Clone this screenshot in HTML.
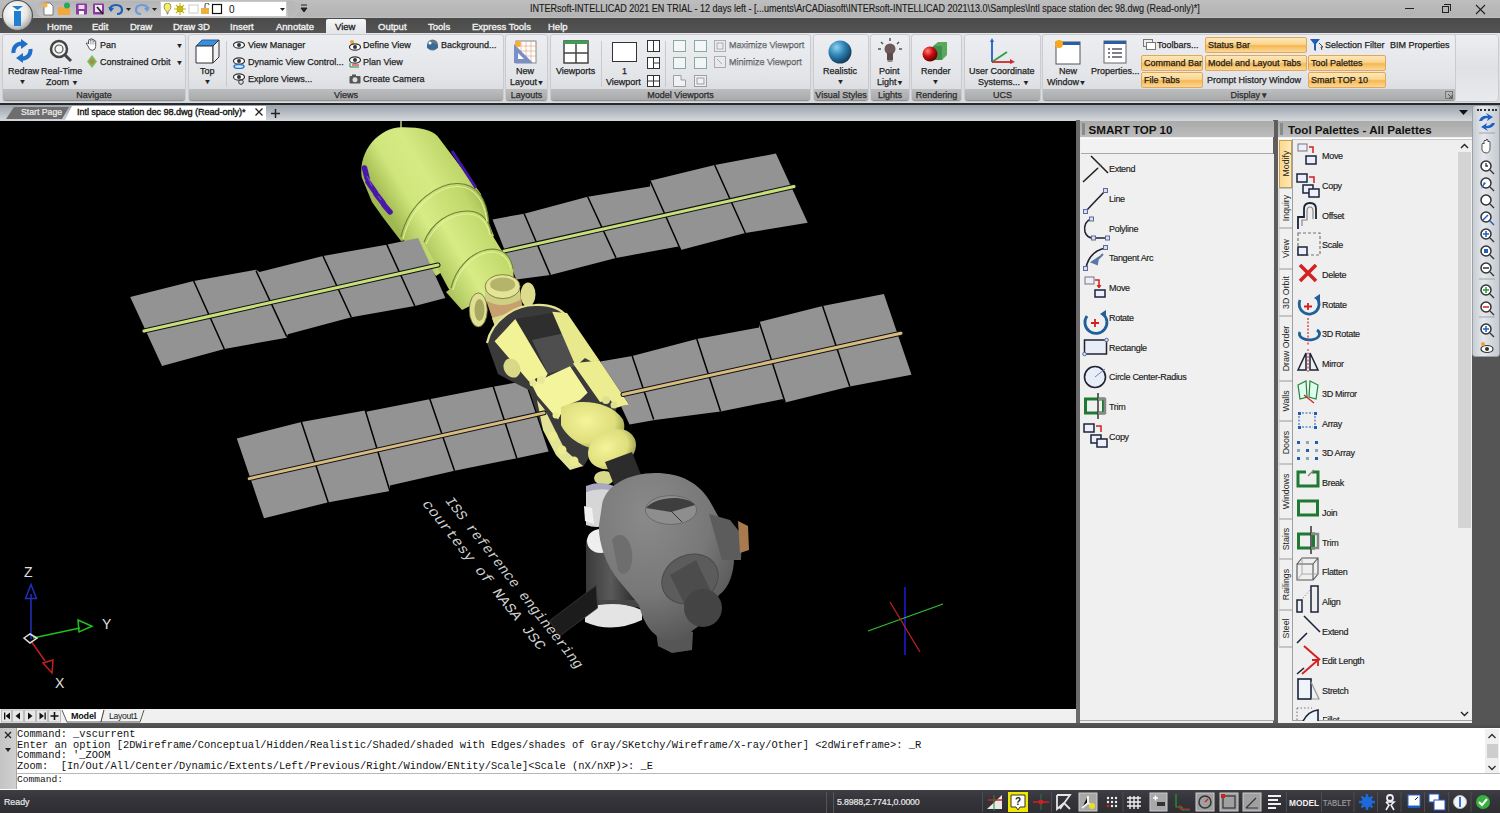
<!DOCTYPE html>
<html><head><meta charset="utf-8">
<style>
*{box-sizing:border-box;margin:0;padding:0}
html,body{width:1500px;height:813px;overflow:hidden;background:#4b4b4b;font-family:"Liberation Sans",sans-serif;font-size:9px;color:#1e1e1e}
#ribbon .t,#ribbon .ob,.lb{-webkit-text-stroke:.25px #222}
.a{position:absolute}
.t{position:absolute;white-space:nowrap;line-height:1}
#title{left:0;top:0;width:1500px;height:18px;background:linear-gradient(#bebebe,#b3b3b3 90%,#c2c2c2)}
#menubar{left:0;top:18px;width:1500px;height:15px;background:linear-gradient(#4a4a4a,#545454)}
#ribbon{left:0;top:33px;width:1500px;height:70px;background:linear-gradient(#e4e5e8,#d9dbdf)}
.pnl{position:absolute;top:2px;height:66px;border-radius:3px;background:linear-gradient(#eceef1 0%,#e3e5e9 60%,#d6d8dc 100%);box-shadow:0 0 0 1px #c9cbcf}
.pnl .lb{position:absolute;left:0;right:0;bottom:0;height:12px;background:linear-gradient(#bcbdbf,#a9aaab);border-bottom:1px solid #929292;border-radius:0 0 3px 3px;text-align:center;font-size:9px;line-height:12px;color:#333}
#filetabs{left:0;top:103px;width:1500px;height:18px;background:linear-gradient(#262a2e 0,#262a2e 1.5px,#9ca3ab 2px,#b4bac1 9px,#d2d6da 17px)}
#viewport{left:0;top:121px;width:1076px;height:588px;background:#000;overflow:hidden}
#modeltabs{left:0;top:709px;width:1076px;height:14px;background:#f0f0f0}
#cmd{left:0;top:728px;width:1500px;height:62px;background:#fff}
#status{left:0;top:790px;width:1500px;height:23px;background:linear-gradient(#3e3e44,#34343a 40%,#2e2e32)}
#smart{left:1080px;top:121px;width:193px;height:602px;background:#f0f0f0}
#tp{left:1278px;top:121px;width:194px;height:602px;background:#f0f0f0}
#rtool{left:1472px;top:105px;width:28px;height:252px;background:linear-gradient(90deg,#c8cdd3,#e4e8ec 40%,#c4cad0);border:1px solid #9aa0a6;border-radius:3px}
.ob{position:absolute;height:16px;border:1px solid #e0a858;border-radius:2px;background:linear-gradient(#fde7b8 0%,#fbd590 45%,#f6b850 55%,#fbd79a 100%);padding-left:2px;line-height:14px;white-space:nowrap;color:#1a1a1a}
.pt{position:absolute;white-space:nowrap;line-height:1;font-size:9px;margin-top:1.5px;margin-left:-1px;letter-spacing:-.3px;color:#1a1a1a;-webkit-text-stroke:.15px #1a1a1a}
.mono{font-family:"Liberation Mono",monospace;font-size:10.4px;line-height:10.7px;white-space:nowrap;color:#111}
.mt{position:absolute;top:4px;font-size:9.5px;color:#f0f0f0;line-height:1;-webkit-text-stroke:.35px #f0f0f0}
</style></head><body>
<!-- TITLE -->
<div id="title" class="a">

  <div class="a" style="left:36px;top:1px;width:262px;height:16px;border-radius:8px;background:linear-gradient(#b4b4b4,#c6c6c6)"></div>
  <svg class="a" style="left:42px;top:2px" width="120" height="14" viewBox="0 0 120 14">
    <path d="M2 1 H8 L11 4 V13 H2 Z" fill="#fff" stroke="#666" stroke-width=".8"/><circle cx="3" cy="3" r="2.5" fill="#f7b040"/>
    <path d="M16 5 H21 L22 6 H28 V13 H16 Z" fill="#f2a83a"/><circle cx="25" cy="3.5" r="3" fill="#2aa860"/>
    <rect x="34" y="1.5" width="11" height="11" fill="#8a3aa0" rx="1"/><rect x="36.5" y="3" width="6" height="4" fill="#e8d8f0"/><rect x="37" y="9" width="5" height="3.5" fill="#fff"/>
    <rect x="51" y="1.5" width="11" height="11" fill="#8a3aa0" rx="1"/><rect x="53" y="3" width="7" height="7" fill="#f0e8f4"/><path d="M55 5 L61 12" stroke="#222" stroke-width="1.8"/>
    <path d="M68 8 Q68 3 74 3 Q80 3 80 8 Q80 12 75 12" stroke="#1f5fb8" stroke-width="2.2" fill="none"/><path d="M66 5 L69 10 L72 6 Z" fill="#1f5fb8"/>
    <path d="M84 6 L89 6 L86.5 9 Z" fill="#222"/>
    <path d="M106 8 Q106 3 100 3 Q94 3 94 8 Q94 12 99 12" stroke="#6a9ad8" stroke-width="2.2" fill="none"/><path d="M108 5 L105 10 L102 6 Z" fill="#6a9ad8"/>
    <path d="M110 6 L115 6 L112.5 9 Z" fill="#222"/>
  </svg>
  <div class="a" style="left:160px;top:1px;width:127px;height:16px;background:#fff;border:1px solid #c8c8c8"></div>
  <svg class="a" style="left:163px;top:3px" width="125" height="12" viewBox="0 0 125 12">
    <path d="M4 11 V9 Q1 6 1 4 Q1 0 4.5 0 Q8 0 8 4 Q8 6 5 9 V11 Z" fill="#f4ee60" stroke="#555" stroke-width=".6"/>
    <circle cx="17" cy="6" r="3" fill="#f0e020" stroke="#444" stroke-width=".5"/><path d="M17 0 V12 M11 6 H23 M13 2 L21 10 M21 2 L13 10" stroke="#c8b800" stroke-width="1.1"/>
    <rect x="26" y="2" width="9" height="8" fill="none" stroke="#ccc"/>
    <rect x="38" y="5" width="8" height="6" fill="#f0b040"/><path d="M42 5 V2 Q42 0 44 0 Q46 0 46 2" stroke="#444" fill="none"/>
    <rect x="49.5" y="1.5" width="9" height="9" fill="#fff" stroke="#111" stroke-width="1.2"/>
    <text x="66" y="10" font-family="Liberation Sans" font-size="10" fill="#111">0</text>
    <path d="M117 5 L122 5 L119.5 8 Z" fill="#222"/>
  </svg>
  <div class="a" style="left:288px;top:1px;width:9px;height:16px;border-radius:0 8px 8px 0;background:#b8b8b8"></div>
  <svg class="a" style="left:300px;top:4px" width="8" height="9" viewBox="0 0 8 9"><path d="M1 1 H7 M1 4 L7 4 L4 8 Z" stroke="#222" fill="#222"/></svg>
  <div class="a" style="left:1405px;top:8px;width:9px;height:1.2px;background:#222"></div>
  <div class="a" style="left:1442px;top:6px;width:7px;height:7px;border:1px solid #222"></div>
  <div class="a" style="left:1444px;top:4px;width:7px;height:7px;border-top:1px solid #222;border-right:1px solid #222"></div>
  <svg class="a" style="left:1475px;top:4px" width="11" height="11" viewBox="0 0 11 11"><path d="M1 1 L10 10 M10 1 L1 10" stroke="#222" stroke-width="1.1"/></svg>
  <div class="t" style="left:530px;top:3.5px;font-size:10.4px;color:#1a1a1a;transform:scaleX(.868);transform-origin:0 0;-webkit-text-stroke:.15px #1a1a1a">INTERsoft-INTELLICAD 2021 EN TRIAL - 12 days left - [...uments\ArCADiasoft\INTERsoft-INTELLICAD 2021\13.0\Samples\Intl space station dec 98.dwg (Read-only)*]</div>
</div>
<!-- MENUBAR -->
<div id="menubar" class="a">
  <div class="mt" style="left:47px">Home</div>
  <div class="mt" style="left:92px">Edit</div>
  <div class="mt" style="left:130px">Draw</div>
  <div class="mt" style="left:173px">Draw 3D</div>
  <div class="mt" style="left:230px">Insert</div>
  <div class="mt" style="left:276px">Annotate</div>
  <div class="a" style="left:326px;top:1px;width:40px;height:14px;background:linear-gradient(#f4f5f7,#e4e6e9);border-radius:2px 2px 0 0"></div>
  <div class="mt" style="left:335px;color:#222;-webkit-text-stroke:.3px #222">View</div>
  <div class="mt" style="left:378px">Output</div>
  <div class="mt" style="left:428px">Tools</div>
  <div class="mt" style="left:472px">Express Tools</div>
  <div class="mt" style="left:548px">Help</div>
</div>

<svg class="a" style="left:1px;top:0px" width="33" height="33" viewBox="0 0 33 33"><defs><radialGradient id="lg" cx=".4" cy=".35" r=".7"><stop offset="0" stop-color="#ffffff"/><stop offset=".6" stop-color="#e6e6e6"/><stop offset="1" stop-color="#9a9a9a"/></radialGradient></defs><circle cx="16.5" cy="15.5" r="15" fill="url(#lg)" stroke="#555" stroke-width="1.2"/><path d="M11 6 H22 L16.5 10 Z" fill="#1f7fd0"/><rect x="13" y="11" width="7" height="15" fill="#1f7fd0"/></svg>
<!-- RIBBON -->
<div id="ribbon" class="a">
  <div class="pnl" style="left:3px;width:182px"><div class="lb">Navigate</div></div>
  <div class="pnl" style="left:189px;width:314px"><div class="lb">Views</div></div>
  <div class="pnl" style="left:506px;width:41px"><div class="lb">Layouts</div></div>
  <div class="pnl" style="left:551px;width:259px"><div class="lb">Model Viewports</div></div>
  <div class="pnl" style="left:814px;width:54px"><div class="lb">Visual Styles</div></div>
  <div class="pnl" style="left:871px;width:38px"><div class="lb">Lights</div></div>
  <div class="pnl" style="left:912px;width:49px"><div class="lb">Rendering</div></div>
  <div class="pnl" style="left:965px;width:75px"><div class="lb">UCS</div></div>
  <div class="a" style="left:1455px;top:2px;width:43px;height:66px;border-radius:0 4px 4px 0;background:linear-gradient(#eceef1,#dfe1e5 50%,#e8eaed);box-shadow:0 0 0 1px #c9cbcf"></div>
<div class="pnl" style="left:1043px;width:412px"><div class="lb">Display &#9662;</div></div>

  <!-- Navigate -->
  <svg class="a" style="left:9px;top:6px" width="26" height="24" viewBox="0 0 26 24"><path d="M4.5 14 C4 8 8 4.5 13 4.5" stroke="#1f6fc8" stroke-width="4" fill="none"/><path d="M12 0 L19 5 L12 10 Z" fill="#1f6fc8"/><path d="M21.5 10 C22 16 18 19.5 13 19.5" stroke="#1f6fc8" stroke-width="4" fill="none"/><path d="M14 14 L7 19 L14 24 Z" fill="#1f6fc8"/></svg>
  <div class="t" style="left:8px;top:34px">Redraw</div><div class="t" style="left:19px;top:45px;font-size:7px">&#9660;</div>
  <svg class="a" style="left:48px;top:5px" width="26" height="26" viewBox="0 0 26 26"><circle cx="11" cy="11" r="8" fill="#f4f4f4" stroke="#444" stroke-width="2.5"/><circle cx="11" cy="11" r="4" fill="none" stroke="#555" stroke-width="1.2"/><path d="M17 17 L23 23" stroke="#444" stroke-width="3"/></svg>
  <div class="t" style="left:41px;top:34px">Real-Time</div><div class="t" style="left:46px;top:45px">Zoom <span style="font-size:7px">&#9660;</span></div>
  <svg class="a" style="left:85px;top:5px" width="13" height="13" viewBox="0 0 13 13"><path d="M3 8 L1.5 6 Q1 4.8 2.3 4.8 L3.5 6 V2.5 Q3.5 1.5 4.4 1.5 Q5.3 1.5 5.3 2.5 V1.6 Q5.3 .6 6.2 .6 Q7.1 .6 7.1 1.6 V2.2 Q7.1 1.2 8 1.2 Q8.9 1.2 8.9 2.2 V3.4 Q8.9 2.6 9.8 2.6 Q10.7 2.6 10.7 3.6 V8.5 Q10.7 12.3 7 12.3 Q4.3 12.3 3 8 Z" fill="#fff" stroke="#444" stroke-width=".9"/><path d="M5.3 2.5 V6.5 M7.1 2 V6.5 M8.9 3 V6.5" stroke="#666" stroke-width=".6"/></svg>
  <div class="t" style="left:100px;top:8px">Pan</div><div class="t" style="left:176px;top:9px;font-size:7px">&#9660;</div>
  <svg class="a" style="left:86px;top:22px" width="12" height="13" viewBox="0 0 12 13"><path d="M6 0 L11 6.5 L6 13 L1 6.5 Z" fill="#7cbf5a"/><path d="M6 3 L9 6.5 L6 10 L3 6.5 Z" fill="#c46a4a" opacity=".6"/></svg>
  <div class="t" style="left:100px;top:25px">Constrained Orbit</div><div class="t" style="left:176px;top:26px;font-size:7px">&#9660;</div>
  <!-- Views -->
  <svg class="a" style="left:195px;top:6px" width="26" height="26" viewBox="0 0 26 26"><path d="M1 7 L7 1 L24 1 L18 7 Z" fill="#3a8ee0" stroke="#2a5f95"/><path d="M1 7 L18 7 L18 24 L1 24 Z" fill="#fff" stroke="#333"/><path d="M18 7 L24 1 L24 18 L18 24 Z" fill="#f0f0f0" stroke="#333"/></svg>
  <div class="t" style="left:200px;top:34px">Top</div><div class="t" style="left:204px;top:45px;font-size:7px">&#9660;</div>
  <div class="a" style="left:226px;top:8px;width:1px;height:46px;background:#c8c9cc"></div>
  <svg class="a" style="left:233px;top:8px" width="12" height="8" viewBox="0 0 12 8"><ellipse cx="6" cy="4" rx="5.5" ry="3.2" fill="#fff" stroke="#333" stroke-width="1.2"/><circle cx="6" cy="4" r="2" fill="#333"/></svg>
  <div class="t" style="left:248px;top:8px">View Manager</div>
  <svg class="a" style="left:233px;top:24px" width="12" height="12" viewBox="0 0 12 12"><ellipse cx="6" cy="4" rx="5.5" ry="3.2" fill="#fff" stroke="#333" stroke-width="1.2"/><circle cx="6" cy="4" r="2" fill="#333"/><ellipse cx="6" cy="9.5" rx="5" ry="2" fill="none" stroke="#1f78c8" stroke-width="1.5"/></svg>
  <div class="t" style="left:248px;top:25px">Dynamic View Control...</div>
  <svg class="a" style="left:233px;top:40px" width="12" height="12" viewBox="0 0 12 12"><ellipse cx="6" cy="4" rx="5.5" ry="3.2" fill="#fff" stroke="#333" stroke-width="1.2"/><circle cx="6" cy="4" r="2" fill="#333"/><circle cx="8" cy="9" r="2.3" fill="none" stroke="#333"/></svg>
  <div class="t" style="left:248px;top:42px">Explore Views...</div>
  <svg class="a" style="left:349px;top:7px" width="12" height="11" viewBox="0 0 12 11"><circle cx="3" cy="2" r="2" fill="#f0a030"/><ellipse cx="6" cy="7" rx="5.5" ry="3.2" fill="#fff" stroke="#333" stroke-width="1.2"/><circle cx="6" cy="7" r="2" fill="#333"/></svg>
  <div class="t" style="left:363px;top:8px">Define View</div>
  <svg class="a" style="left:349px;top:23px" width="12" height="12" viewBox="0 0 12 12"><ellipse cx="6" cy="4" rx="5.5" ry="3.2" fill="#fff" stroke="#333" stroke-width="1.2"/><circle cx="6" cy="4" r="2" fill="#333"/><path d="M1 7 L1 11 L10 11" stroke="#2a8a3a" fill="none"/><path d="M3 9 L10 9" stroke="#d02020"/></svg>
  <div class="t" style="left:363px;top:25px">Plan View</div>
  <svg class="a" style="left:349px;top:41px" width="12" height="10" viewBox="0 0 12 10"><rect x="0.5" y="2" width="11" height="7.5" rx="1" fill="#555"/><circle cx="6" cy="5.7" r="2.5" fill="#ddd"/><rect x="3" y="0.5" width="4" height="2" fill="#555"/></svg>
  <div class="t" style="left:363px;top:42px">Create Camera</div>
  <svg class="a" style="left:426px;top:6px" width="13" height="12" viewBox="0 0 13 12"><circle cx="6.5" cy="6" r="5.5" fill="#6a7a80"/><path d="M1 6 Q6 2 12 6 L12 9 Q6 12 1 9 Z" fill="#3a6a9a"/><circle cx="4" cy="4" r="1.5" fill="#fff"/></svg>
  <div class="t" style="left:441px;top:8px">Background...</div>
  <!-- Layouts -->
  <svg class="a" style="left:513px;top:7px" width="24" height="24" viewBox="0 0 24 24"><rect x="3" y="1" width="20" height="22" fill="#fff" stroke="#888"/><path d="M3 6 H23 M3 11 H23 M3 16 H23 M8 1 V23 M13 1 V23 M18 1 V23" stroke="#e0a070" stroke-width=".6"/><path d="M1 23 L1 4 L20 23 Z" fill="#7a8fc8"/><path d="M5 19 L5 13 L11 19 Z" fill="#fff"/><circle cx="5" cy="4" r="3" fill="#f7b030"/></svg>
  <div class="t" style="left:516px;top:34px">New</div><div class="t" style="left:510px;top:45px">Layout<span style="font-size:7px">&#9660;</span></div>
  <!-- Model Viewports -->
  <svg class="a" style="left:563px;top:7px" width="26" height="24" viewBox="0 0 26 24"><rect x="1" y="1" width="24" height="22" fill="#fff" stroke="#444" stroke-width="1.5"/><rect x="1" y="1" width="24" height="3" fill="#3aa050"/><path d="M13 4 V23 M1 13 H25" stroke="#444" stroke-width="1.5"/></svg>
  <div class="t" style="left:556px;top:34px">Viewports</div>
  <div class="a" style="left:601px;top:8px;width:1px;height:46px;background:#c8c9cc"></div>
  <div class="a" style="left:612px;top:9px;width:25px;height:20px;background:#fff;border:1px solid #333"></div>
  <div class="t" style="left:622px;top:34px">1</div><div class="t" style="left:606px;top:45px">Viewport</div>
  <svg class="a" style="left:647px;top:7px" width="13" height="48" viewBox="0 0 13 48"><rect x=".5" y=".5" width="12" height="11" fill="#fff" stroke="#333"/><path d="M6.5 .5 V11.5" stroke="#333"/><rect x=".5" y="17.5" width="12" height="11" fill="#fff" stroke="#333"/><path d="M6.5 17.5 V28.5 M6.5 23 H12.5" stroke="#333"/><rect x=".5" y="35.5" width="12" height="11" fill="#fff" stroke="#333"/><path d="M6.5 35.5 V46.5 M.5 41 H12.5" stroke="#333"/></svg>
  <div class="a" style="left:665px;top:8px;width:1px;height:46px;background:#c8c9cc"></div>
  <svg class="a" style="left:673px;top:7px" width="34" height="48" viewBox="0 0 34 48" opacity=".55"><rect x=".5" y=".5" width="12" height="11" fill="#fff" stroke="#3a7a5a"/><rect x="21.5" y=".5" width="12" height="11" fill="#fff" stroke="#3a7a5a"/><rect x=".5" y="17.5" width="12" height="11" fill="#fff" stroke="#3a7a5a"/><rect x="21.5" y="17.5" width="12" height="11" fill="#fff" stroke="#3a7a5a"/><path d="M.5 35.5 H8 V40 H12.5 V46.5 H.5 Z" fill="#fff" stroke="#666"/><rect x="21.5" y="35.5" width="12" height="11" fill="#fff" stroke="#666"/><rect x="24" y="38" width="7" height="6" fill="none" stroke="#666"/></svg>
  <svg class="a" style="left:714px;top:7px" width="12" height="28" viewBox="0 0 12 28" opacity=".4"><rect x=".5" y=".5" width="11" height="11" fill="#eee" stroke="#555"/><rect x="3" y="3" width="6" height="6" fill="none" stroke="#555"/><rect x=".5" y="16.5" width="11" height="11" fill="#eee" stroke="#555"/><path d="M3 19 L8 24" stroke="#555"/></svg>
  <div class="t" style="left:729px;top:8px;color:#a8a9ad">Maximize Viewport</div>
  <div class="t" style="left:729px;top:25px;color:#a8a9ad">Minimize Viewport</div>
  <!-- Visual styles -->
  <svg class="a" style="left:828px;top:7px" width="24" height="24" viewBox="0 0 24 24"><defs><radialGradient id="gb" cx=".35" cy=".3" r=".7"><stop offset="0" stop-color="#8fd0f0"/><stop offset=".5" stop-color="#2f86b8"/><stop offset="1" stop-color="#14405e"/></radialGradient></defs><circle cx="12" cy="12" r="11.5" fill="url(#gb)"/></svg>
  <div class="t" style="left:823px;top:34px">Realistic</div><div class="t" style="left:837px;top:45px;font-size:7px">&#9660;</div>
  <!-- Lights -->
  <svg class="a" style="left:877px;top:5px" width="26" height="26" viewBox="0 0 26 26"><path d="M13 0 V3 M4 4 L6 6 M22 4 L20 6 M1 11 H4 M22 11 H25" stroke="#555" stroke-width="1.5"/><circle cx="13" cy="11" r="5.5" fill="#6a5a5a"/><rect x="10" y="15" width="6" height="7" fill="#5a4a4a"/><rect x="10.5" y="22" width="5" height="2" fill="#888"/></svg>
  <div class="t" style="left:879px;top:34px">Point</div><div class="t" style="left:877px;top:45px">Light<span style="font-size:7px">&#9660;</span></div>
  <!-- Rendering -->
  <svg class="a" style="left:922px;top:8px" width="26" height="24" viewBox="0 0 26 24"><path d="M11 5 L16 1 L25 1 L25 14 L20 19 L11 19 Z" fill="#5aa85a"/><path d="M11 5 L20 5 L20 19 L11 19 Z" fill="#3f8f4f"/><defs><radialGradient id="gr" cx=".35" cy=".3" r=".7"><stop offset="0" stop-color="#ff8080"/><stop offset=".5" stop-color="#d01010"/><stop offset="1" stop-color="#600"/></radialGradient></defs><circle cx="8" cy="13" r="7.5" fill="url(#gr)"/></svg>
  <div class="t" style="left:921px;top:34px">Render</div><div class="t" style="left:932px;top:45px;font-size:7px">&#9660;</div>
  <!-- UCS -->
  <svg class="a" style="left:990px;top:5px" width="26" height="26" viewBox="0 0 26 26"><path d="M2 24 V2" stroke="#1f5fc8" stroke-width="1.8"/><path d="M0 4 L2 0 L4 4Z" fill="#1f5fc8"/><path d="M2 24 L17 14" stroke="#2aa040" stroke-width="1.8"/><path d="M2 24 H22" stroke="#d02828" stroke-width="1.8"/><path d="M20 21 L25 24 L20 26Z" fill="#d02828"/></svg>
  <div class="t" style="left:969px;top:34px">User Coordinate</div><div class="t" style="left:978px;top:45px">Systems... <span style="font-size:7px">&#9660;</span></div>
  <!-- Display -->
  <svg class="a" style="left:1055px;top:7px" width="26" height="26" viewBox="0 0 26 26"><rect x="1" y="2" width="24" height="22" fill="#fff" stroke="#555"/><rect x="1" y="2" width="24" height="3" fill="#2a5fa8"/><circle cx="4" cy="4" r="4" fill="#f7a820"/></svg>
  <div class="t" style="left:1059px;top:34px">New</div><div class="t" style="left:1047px;top:45px">Window<span style="font-size:7px">&#9660;</span></div>
  <svg class="a" style="left:1103px;top:7px" width="24" height="24" viewBox="0 0 24 24"><rect x="1" y="1" width="22" height="22" fill="#fff" stroke="#666"/><rect x="1" y="1" width="22" height="3" fill="#2a5fa8"/><path d="M5 9 H7 M9 9 H19 M5 13 H7 M9 13 H19 M5 17 H7 M9 17 H19" stroke="#556" stroke-width="1.3"/></svg>
  <div class="t" style="left:1091px;top:34px">Properties...</div>
  <svg class="a" style="left:1143px;top:6px" width="13" height="11" viewBox="0 0 13 11"><rect x=".5" y=".5" width="9" height="7" fill="#eee" stroke="#777"/><rect x="3.5" y="3.5" width="9" height="7" fill="#fff" stroke="#777"/></svg>
  <div class="t" style="left:1157px;top:8px">Toolbars...</div>
  <div class="ob" style="left:1141px;top:22px;width:62px">Command Bar</div>
  <div class="ob" style="left:1141px;top:39px;width:62px">File Tabs</div>
  <div class="ob" style="left:1205px;top:4px;width:102px">Status Bar</div>
  <div class="ob" style="left:1205px;top:22px;width:102px">Model and Layout Tabs</div>
  <div class="t" style="left:1207px;top:43px">Prompt History Window</div>
  <svg class="a" style="left:1310px;top:6px" width="14" height="12" viewBox="0 0 14 12"><path d="M0 0 H10 L6 5 V12 L4 11 V5 Z" fill="#1f5fb8"/><path d="M9 4 L13 8 L11 8 L12 11" stroke="#333" fill="none" stroke-width=".9"/></svg>
  <div class="t" style="left:1325px;top:8px">Selection Filter</div>
  <div class="ob" style="left:1308px;top:22px;width:78px">Tool Palettes</div>
  <div class="ob" style="left:1308px;top:39px;width:78px">Smart TOP 10</div>
  <div class="t" style="left:1390px;top:8px">BIM Properties</div>
  <svg class="a" style="left:1445px;top:58px" width="8" height="8" viewBox="0 0 8 8"><rect x=".5" y=".5" width="7" height="7" fill="none" stroke="#777"/><path d="M3 3 L7 7 M7 4 V7 H4" stroke="#555" fill="none"/></svg>
</div>
<div id="filetabs" class="a">
  <svg class="a" style="left:0;top:0" width="300" height="17" viewBox="0 0 300 17"><path d="M6 16 L14 4 H69 L62 16 Z" fill="#6e6e6e"/><path d="M65 17 L72 3 H266 V17 Z" fill="#fff"/></svg>
  <div class="t" style="left:21px;top:5px;color:#eee;font-size:8.7px;-webkit-text-stroke:.2px #eee">Start Page</div>
  <div class="t" style="left:77px;top:5px;color:#111;font-size:9.2px;letter-spacing:-.1px;-webkit-text-stroke:.35px #111">Intl space station dec 98.dwg (Read-only)*</div>
  <svg class="a" style="left:255px;top:5px" width="8" height="8" viewBox="0 0 8 8"><path d="M.5 .5 L7.5 7.5 M7.5 .5 L.5 7.5" stroke="#222" stroke-width="1.3"/></svg>
  <svg class="a" style="left:271px;top:6px" width="9" height="9" viewBox="0 0 9 9"><path d="M4.5 0 V9 M0 4.5 H9" stroke="#222" stroke-width="1.5"/></svg>
  <svg class="a" style="left:1459px;top:7px" width="9" height="6" viewBox="0 0 9 6"><path d="M0 0 H9 L4.5 5 Z" fill="#111"/></svg>
</div>
<div id="viewport" class="a">
<svg class="a" style="left:0;top:0" width="1076" height="588" viewBox="0 121 1076 588">
<defs>
<linearGradient id="gS1" gradientUnits="userSpaceOnUse" x1="395" y1="225" x2="495" y2="165"><stop offset="0" stop-color="#a0b850"/><stop offset=".22" stop-color="#d0e67c"/><stop offset=".45" stop-color="#d6ea84"/><stop offset=".75" stop-color="#bcd466"/><stop offset="1" stop-color="#889e3e"/></linearGradient>
<linearGradient id="gS2" gradientUnits="userSpaceOnUse" x1="400" y1="245" x2="500" y2="190"><stop offset="0" stop-color="#a0b850"/><stop offset=".3" stop-color="#d8ec86"/><stop offset=".7" stop-color="#c0d86a"/><stop offset="1" stop-color="#889e3e"/></linearGradient>
<linearGradient id="gYel" gradientUnits="userSpaceOnUse" x1="490" y1="370" x2="610" y2="310"><stop offset="0" stop-color="#c8c878"/><stop offset=".35" stop-color="#f2f2a6"/><stop offset="1" stop-color="#d8d88a"/></linearGradient>
<linearGradient id="gS3" gradientUnits="userSpaceOnUse" x1="425" y1="270" x2="520" y2="215"><stop offset="0" stop-color="#a0b850"/><stop offset=".35" stop-color="#d8ec86"/><stop offset=".7" stop-color="#c0d86a"/><stop offset="1" stop-color="#889e3e"/></linearGradient>
<radialGradient id="gBell" cx=".4" cy=".4" r=".7"><stop offset="0" stop-color="#f4f49a"/><stop offset=".65" stop-color="#dede7c"/><stop offset="1" stop-color="#8e8e48"/></radialGradient>
<radialGradient id="gG" cx=".35" cy=".25" r=".85"><stop offset="0" stop-color="#8a8a8a"/><stop offset=".55" stop-color="#787878"/><stop offset="1" stop-color="#505050"/></radialGradient>
<linearGradient id="gPMA" x1="0" y1="0" x2="1" y2="0"><stop offset="0" stop-color="#3a3a3a"/><stop offset=".5" stop-color="#5a5a5a"/><stop offset="1" stop-color="#2a2a2a"/></linearGradient>
</defs>
<g stroke="#000" stroke-width="1.5">
<path d="M492.5 219.4 L524.2 213.7 L587.7 196.7 L650.1 186.5 L650.1 180.8 L714.7 164.9 L775.9 153.6 L807.7 222.8 L745.3 233 L680.7 250 L678.4 246.6 L616 257.9 L550.3 274.9 L516.3 279.5 Z" fill="#939393" stroke="none"/>
<path d="M524.2 213.7 L550.3 274.9 M587.7 196.7 L616 257.9 M650 180.8 L680.7 250 M714.7 165 L745.3 233"/>
<path d="M236.8 438.5 L301.4 422 L364.9 410.6 L366 411.7 L429.5 399.3 L493 386.8 L524.8 381.1 L548.6 451.4 L516.8 458.2 L454.5 470.7 L389.9 485.4 L389.9 491.1 L327.5 502.5 L264 518.3 Z" fill="#939393" stroke="none"/>
<path d="M301.4 422 L328.6 503.6 M365 409.5 L389.9 491 M429.5 398 L454.5 470.7 M493 385.7 L516.8 458.2"/>
<path d="M600.4 361.6 L632.2 356 L696.8 339 L759.1 327.6 L759.1 322 L822.6 306.1 L883.9 294.1 L911.5 374.8 L849.8 386.6 L785.2 402.4 L783 399 L720.6 411.5 L654.8 420 L629.5 424.4 Z" fill="#939393" stroke="none"/>
<path d="M632.2 356 L653.7 419.5 M696.8 339 L720.6 411.5 M759.1 322 L785.2 402.4 M822.6 306 L849.8 386.6"/>
</g>
<g stroke-linecap="round">
<path d="M503.8 251.1 L794 186.5" stroke="#111" stroke-width="5"/><path d="M503.8 251.1 L794 186.5" stroke="#c8e07c" stroke-width="3"/>
</g>
<path d="M401 120 V128" stroke="#b8c878" stroke-width="1.5"/>
<!-- upper module -->
<path d="M361.7 177.2 C358 150 380 127 402 127.2 C420 127 432 130 437.4 136 L480.7 193.5 L488.9 223.3 L401 241 L383 217.6 L372 202 Z" fill="url(#gS1)"/>
<path d="M400.9 236.8 C410 200 440 183 458 183.5 C478 184 487 200 488.9 223.3 L494 236 L436 276 L430 268 Z" fill="url(#gS2)"/>
<path d="M423.9 242.2 C432 222 450 211 468 211 C482 211 490 222 491.6 234 L513.2 269.3 L452 292 L448.3 288.2 Z" fill="url(#gS3)"/>
<path d="M451 288.2 C455 270 470 251 491.6 249 C503 249 511 256 513.2 269.3 L514 285 L505 298 L470 306 L462 310 L446 292 Z" fill="url(#gS3)"/>
<path d="M400.9 236.8 C410 200 440 183 458 183.5 C478 184 487 200 488.9 223.3 M423.9 242.2 C432 222 450 211 468 211 C482 211 490 222 491.6 234 M451 288.2 C455 270 470 251 491.6 249 C503 249 511 256 513.2 269.3" stroke="#6e8236" stroke-width="1.1" fill="none"/>
<path d="M403 239 C412 203 441 186 458 186.5 C476 187 485 203 487 222 M426 244 C434 225 451 214 468 214 C481 214 488 224 490 235 M453 290 C457 273 471 254 491 252 C502 252 509 259 511 270" stroke="#e8f4a0" stroke-width="1.2" fill="none" opacity=".8"/>
<g stroke="#4818a8" stroke-width="5.5" stroke-linecap="round" fill="none"><path d="M364.5 168 L367 178"/><path d="M368 182 L375 192"/><path d="M376 194 L383 203"/><path d="M384 205 L390 212"/></g><path d="M367 176 L372 186 M378 196 L381 200" stroke="#9a80d0" stroke-width="1" opacity=".6"/>
<path d="M452 151 L476 188" stroke="#4818a8" stroke-width="3"/>
<!-- UL wing in front of module -->
<path d="M130.2 296.9 L193.7 281 L256 269.7 L259.5 272 L323 256 L386.4 244.7 L418.2 238 L445.4 298 L414.8 306 L351.3 317.3 L287.8 334.3 L286.7 337.7 L224.3 349 L162 366 Z" fill="#939393"/>
<path d="M193.7 281 L224.3 349 M256 270.8 L286.7 336.6 M323 256 L351.3 317.3 M386.4 243.6 L414.8 306" stroke="#000" stroke-width="1.5"/>

<path d="M144 331 L438 265" stroke="#111" stroke-width="5" stroke-linecap="round"/><path d="M144 331 L438 265" stroke="#c8e07c" stroke-width="3" stroke-linecap="round"/>
<!-- node -->
<path d="M486 300 L520 290 L524 318 L497 332 Z" fill="#c8a070"/>
<path d="M492 318 L520 310 L528 330 L500 342 Z" fill="#d8d88a"/>
<ellipse cx="528" cy="294.4" rx="7.5" ry="12" fill="#dcdc8c"/>
<path d="M485 287 L520 287 L520 300 Q502 310 485 300 Z" fill="#d0d084"/>
<ellipse cx="502.6" cy="286.6" rx="17.5" ry="12" fill="#e4e498" stroke="#6a6a30" stroke-width=".8"/>
<ellipse cx="502.6" cy="284.5" rx="12.5" ry="7" fill="#b4b46a"/>
<ellipse cx="478.3" cy="309.9" rx="9" ry="17" fill="#e0e094" stroke="#6a6a30" stroke-width=".8"/>
<ellipse cx="479.5" cy="310" rx="5" ry="11" fill="#a8a860"/>
<!-- lower module -->
<path d="M487 343 C492 320 515 305 535 305 C552 304 562 310 566 316 L599 360 L629 404 L617 408 L600 440 L583 467 L563 462 L541 425 L529 390 L509 380 L498 374 Z" fill="#3a3a3a"/>
<path d="M487 343 C492 320 515 305 535 305 C552 304 562 310 566 316" stroke="#e4e494" stroke-width="2.2" fill="none"/>
<path d="M515.3 319 L552.2 313 L575.8 366.3 L547.7 373.7 Z" fill="#2e2e2e"/>
<path d="M532 340 L565 333 L575.8 366.3 L547.7 373.7 Z" fill="#4e4e4e"/>
<path d="M494.6 341.2 L515.3 319 L547.7 373.7 L544 380 L536 378 L532 384 L528.6 381 Z" fill="#f2f296"/>
<path d="M552.2 311.7 L567 313 L599.4 360.4 L592 362 L585 358 L575.8 366.3 Z" fill="#e8e88c"/>
<path d="M531.5 384 L570 366.3 L587.6 392.8 L580 400 L570 404 L562 412 L558 419.4 L537.4 395.8 Z" fill="#f4f49c"/>
<path d="M572.8 363.3 L599.4 360.4 L629 404.6 L622 406 L617 407.6 L610 400 L600 402 L593.5 392.8 Z" fill="#ecec90"/>
<circle cx="541" cy="380" r="4" fill="#e8e898"/><circle cx="533" cy="383" r="3.5" fill="#e8e898"/>
<circle cx="606" cy="400" r="4" fill="#e0e090"/><circle cx="614" cy="405" r="3.5" fill="#e0e090"/>
<circle cx="565" cy="412" r="4" fill="#ecec90"/><circle cx="556" cy="415" r="3.5" fill="#ecec90"/>
<ellipse cx="512" cy="368" rx="8" ry="10" transform="rotate(-30 512 368)" fill="#d8d888"/>
<path d="M537 400 L545 410 L565 450 L583 466 L570 470 L556 455 L543 430 Z" fill="#e4e496"/>
<circle cx="553" cy="436" r="4.5" fill="#ecec90"/><circle cx="562" cy="450" r="4.5" fill="#ecec90"/><circle cx="574" cy="461" r="4.5" fill="#ecec90"/>
<g stroke-linecap="round"><path d="M249.3 478.6 L544 412.9" stroke="#111" stroke-width="5"/><path d="M249.3 478.6 L544 412.9" stroke="#d6bc80" stroke-width="3"/><path d="M623 394.5 L900.9 333.3" stroke="#111" stroke-width="5"/><path d="M623 394.5 L900.9 333.3" stroke="#d6bc80" stroke-width="3"/></g>
<!-- bell & sphere -->
<path d="M561 407.6 C575 398 610 400 623 419.4 C628 432 618 446 605 449 C590 452 568 440 561 425 Z" fill="url(#gBell)"/>
<ellipse cx="612" cy="449" rx="25" ry="19" transform="rotate(-25 612 449)" fill="url(#gBell)"/>
<ellipse cx="604" cy="478" rx="10" ry="7" fill="#d8d88a"/>
<!-- white PMA upper -->
<path d="M586 492 Q598 484 614 488 L616 522 Q600 530 586 525 Z" fill="#d6d6d6"/>
<path d="M586 486 Q600 480 614 486 L614 491 Q600 487 586 492 Z" fill="#a8a8c0"/>
<path d="M584 506 L592 508 L594 524 L585 521 Z" fill="#f0f0f0"/>
<!-- dark connector -->
<path d="M605 462 L632 452 L647 490 L620 500 Z" fill="#2c2c2c"/>
<!-- lower PMA -->
<path d="M586 540 L614 540 L636 604 L636 618 L586 618 Z" fill="url(#gPMA)"/>
<ellipse cx="600.5" cy="541" rx="13.5" ry="12" fill="#eeeeee"/>
<path d="M585 605 Q612 598 642 610 L642 620 Q612 634 585 622 Z" fill="#e4e4e4"/>
<path d="M586 600 L640 600 L640 608 Q612 600 586 608 Z" fill="#454545"/>
<!-- dark edge-on panel -->
<path d="M549.6 620.7 L596 585.5 L597.6 608 L559 636.6 Z" fill="#1c1c1c" stroke="#3a3a3a" stroke-width=".8"/>
<!-- grey node module -->
<path d="M655 624 L693 632 L692 650 L672 653 L658 646 Z" fill="#565656"/>
<path d="M602 505 C605 485 630 473 655 473 C680 473 700 482 712 505 L732 541 C737 560 733 585 719 595 L700 625 L680 640 C660 645 645 630 639 605 L620 582 C605 565 598 540 599 525 Z" fill="url(#gG)"/>
<path d="M709 514 L730 520 L742 535 L741 560 L722 560 Z" fill="#5c5c5c"/>
<path d="M738 521 L748 526 L749 550 L740 553 Z" fill="#a87a50"/>
<ellipse cx="671" cy="510" rx="25.6" ry="14.4" fill="#8e8e8e" stroke="#6a6a6a" stroke-width="1"/>
<path d="M646 508 C655 497 685 494 695 505 L671 512 Z" fill="#3e3e3e"/>
<path d="M671 511 L682 522" stroke="#333" stroke-width="1"/>
<path d="M612 540 C618 530 630 535 632 552 C634 570 624 580 618 570 Z" fill="#6e6e6e"/>
<ellipse cx="690" cy="579" rx="29" ry="24" transform="rotate(-25 690 579)" fill="#5c5c5c" stroke="#4a4a4a"/>
<path d="M670 575 L696 560 L715 600 L690 615 Z" fill="#4c4c4c"/>
<circle cx="703" cy="608" r="19" fill="#444"/>
<!-- text -->
<g fill="#cfcfcf" font-family="Liberation Mono" font-size="14">
<text transform="translate(445,501) rotate(52)" textLength="214" lengthAdjust="spacingAndGlyphs" font-style="italic">ISS reference engineering</text>
<text transform="translate(422,504) rotate(51.5)" textLength="188" lengthAdjust="spacingAndGlyphs" font-style="italic">courtesy of NASA JSC</text>
</g>
<!-- UCS icon -->
<g fill="none" stroke-width="1.5">
<path d="M31 639 L31 594" stroke="#2030c0"/><path d="M25.5 598.5 L31 584.5 L36.5 598.5 Z" stroke="#2030c0"/>
<path d="M33 638 L80 628" stroke="#20c020"/><path d="M78 620 L92 626.3 L79 632 Z" stroke="#20c020"/>
<path d="M31 641 L45 661" stroke="#c02020"/><path d="M43 663 L52 673 L53 660 Z" stroke="#c02020"/>
<path d="M24 638 L30 634 L37 638 L30 643 Z" stroke="#e0e0e0"/>
</g>
<g fill="#e0e0e0" font-family="Liberation Sans" font-size="14">
<text x="24" y="577">Z</text><text x="102" y="629">Y</text><text x="55" y="688">X</text>
</g>
<path d="M905 587 L905 655" stroke="#1a1ad0" stroke-width="1.6"/>
<path d="M868 631 L943 604" stroke="#30c030" stroke-width="1.3"/>
<path d="M890 602 L920 652" stroke="#c02020" stroke-width="1.3"/>
</svg>
</div>
<!-- separators / frame -->
<div class="a" style="left:1076px;top:120px;width:4px;height:603px;background:#6a6a6a"></div>
<div class="a" style="left:1273px;top:120px;width:5px;height:603px;background:#5e5e5e"></div>
<div class="a" style="left:0;top:723px;width:1500px;height:5px;background:linear-gradient(#585858,#4a4a4a)"></div>
<div class="a" style="left:1472px;top:357px;width:28px;height:366px;background:#555"></div>
<!-- SMART TOP 10 -->
<div id="smart" class="a">
  <div class="a" style="left:0;top:0;width:194px;height:16px;background:linear-gradient(#aaaaaa,#bdbdbd)"></div>
  <div class="a" style="left:2px;top:2px;width:3px;height:12px;background:#8a8a8a"></div>
  <div class="t" style="left:8.5px;top:3px;font-size:11.6px;font-weight:bold;color:#111">SMART TOP 10</div>
  <div class="a" style="left:1px;top:17px;width:192px;height:16px;background:#f2f2f2;border-top:1px solid #fff"></div>
  <div class="a" style="left:1px;top:32px;width:192px;height:1px;background:#a8a8a8"></div>
  <div class="a" style="left:0;top:33px;width:194px;height:566px;background:#f0f0f0"></div>
  <div class="a" style="left:0;top:599px;width:194px;height:1px;background:#a8a8a8"></div>
  <svg class="a" style="left:1px;top:34px" width="30" height="300" viewBox="0 0 30 300" fill="none" stroke-width="1.6">
<g transform="translate(0 0)"><path d="M2 27 L17 13" stroke="#222"/><path d="M10 1 L27 18" stroke="#222"/><path d="M17 13 L21 9" stroke="#9ab" stroke-width=".8" stroke-dasharray="1 1"/></g>
<g transform="translate(0 0)"><path d="M5 56 L24 36" stroke="#223"/><rect x="2.5" y="54.5" width="4" height="4" fill="#dde" stroke="#5a6a9a" stroke-width="1"/><rect x="22.5" y="33.5" width="4" height="4" fill="#dde" stroke="#5a6a9a" stroke-width="1"/></g>
<g transform="translate(0 -3)"><path d="M10 67 Q2 70 4 80 Q6 86 12 86 L26 86" stroke="#223"/><rect x="8.5" y="65" width="4" height="4" fill="#dde" stroke="#5a6a9a" stroke-width="1"/><rect x="10.5" y="84" width="4" height="4" fill="#dde" stroke="#5a6a9a" stroke-width="1"/><rect x="24.5" y="84" width="4" height="4" fill="#dde" stroke="#5a6a9a" stroke-width="1"/></g>
<g transform="translate(0 -3)"><path d="M5 116 Q8 100 24 96" stroke="#223"/><rect x="2.5" y="114.5" width="4" height="4" fill="#dde" stroke="#5a6a9a" stroke-width="1"/><rect x="22.5" y="93.5" width="4" height="4" fill="#dde" stroke="#5a6a9a" stroke-width="1"/><path d="M11 110 L17 106 L16 112 Z M15 109 L22 102" stroke="#5a78a8" fill="#5a78a8" stroke-width="2"/></g>
<g transform="translate(0 -6)"><rect x="4" y="128" width="9" height="7" fill="#eef" stroke="#777" stroke-width="1"/><rect x="14" y="141" width="10" height="7" fill="#eef" stroke="#1a2438" stroke-width="1.5"/><path d="M14 131 H18 V137" stroke="#d02020" stroke-width="1.5"/><path d="M16 136 L18 139 L20 136" stroke="#d02020" fill="#d02020" stroke-width="1"/></g>
<g transform="translate(0 -1)"><path d="M22 160 A11 11 0 1 1 6 162" stroke="#1f5f9a" stroke-width="2.8"/><path d="M19 160 L25 156 L25 164 Z" fill="#1f5f9a" stroke="none"/><path d="M14 165 V173 M10 169 H18" stroke="#d02020" stroke-width="1.8"/></g>
<g transform="translate(0 -7)"><rect x="3.5" y="192" width="22" height="14" fill="#e8eef8" stroke="#223" stroke-width="1.5"/><circle cx="3.5" cy="206" r="1.8" fill="#dde" stroke="#5a6a9a" stroke-width="1"/><circle cx="25.5" cy="192" r="1.8" fill="#dde" stroke="#5a6a9a" stroke-width="1"/></g>
<g transform="translate(0 -9)"><circle cx="14" cy="231" r="10.5" fill="#e8eef8" stroke="#223" stroke-width="1.6"/><path d="M14 231 L24 223" stroke="#6a8ac8" stroke-width="1"/></g>
<g transform="translate(0 -6)"><rect x="4.5" y="250" width="18" height="14" stroke="#1e7a32" stroke-width="3"/><path d="M17 244 V270" stroke="#333" stroke-width="1.5"/><path d="M17 250 H24 V264 H17" stroke="#888" stroke-width="2.5"/></g>
<g transform="translate(0 -7)"><rect x="3" y="276" width="10" height="8" fill="#eef" stroke="#1a2438" stroke-width="1.5"/><rect x="10" y="287" width="10" height="8" fill="#eef" stroke="#1a2438" stroke-width="1.5"/><rect x="16" y="291" width="10" height="8" fill="#eef" stroke="#1a2438" stroke-width="1.5"/><path d="M15 278 H20 V284" stroke="#d02020" stroke-width="1.5"/></g>
  </svg>
  <div class="pt" style="left:30px;top:42px">Extend</div>
  <div class="pt" style="left:30px;top:72px">Line</div>
  <div class="pt" style="left:30px;top:102px">Polyline</div>
  <div class="pt" style="left:30px;top:131px">Tangent Arc</div>
  <div class="pt" style="left:30px;top:161px">Move</div>
  <div class="pt" style="left:30px;top:191px">Rotate</div>
  <div class="pt" style="left:30px;top:221px">Rectangle</div>
  <div class="pt" style="left:30px;top:250px">Circle Center-Radius</div>
  <div class="pt" style="left:30px;top:280px">Trim</div>
  <div class="pt" style="left:30px;top:310px">Copy</div>
</div>
<!-- TOOL PALETTES -->
<div id="tp" class="a">
  <div class="a" style="left:0;top:0;width:194px;height:16px;background:linear-gradient(#aaaaaa,#bdbdbd)"></div>
  <div class="a" style="left:2px;top:2px;width:3px;height:12px;background:#8a8a8a"></div>
  <div class="t" style="left:10px;top:3px;font-size:11.6px;font-weight:bold;color:#111">Tool Palettes - All Palettes</div>
  <div class="a" style="left:0;top:17px;width:194px;height:583px;background:#f0f0f0;border-top:1px solid #fff"></div>
  <div class="a" style="left:14px;top:18px;width:180px;height:582px;background:#efefef;border-left:1px solid #a0a0a0;border-top:1px solid #c8c8c8;border-bottom:1px solid #a0a0a0"></div>
  <div class="a" style="left:180px;top:31px;width:13px;height:376px;background:#d4d4d4"></div>
  <svg class="a" style="left:182px;top:22px" width="9" height="6" viewBox="0 0 9 6"><path d="M1 5 L4.5 1.5 L8 5" stroke="#222" stroke-width="1.4" fill="none"/></svg>
  <svg class="a" style="left:182px;top:590px" width="9" height="6" viewBox="0 0 9 6"><path d="M1 1 L4.5 4.5 L8 1" stroke="#222" stroke-width="1.4" fill="none"/></svg>
  <!-- tabs -->
  <div class="a" style="left:1px;top:19px;width:13px;height:48px;background:linear-gradient(90deg,#fbd88c,#fde9b8);border:1px solid #c8a050"></div>
  <svg class="a" style="left:0;top:18px" width="15" height="520" viewBox="0 0 15 520">
    <g stroke="#9a9a9a" stroke-width="1"><path d="M1 49 H14 M1 89 H14 M1 130 H14 M1 177 H14 M1 242 H14 M1 282 H14 M1 325 H14 M1 380 H14 M1 420 H14 M1 471 H14 M1 508 H14"/><path d="M1 49 V508" stroke="#c8c8c8"/></g>
    <g font-family="Liberation Sans" font-size="8.8" fill="#222" text-anchor="middle" style="-webkit-text-stroke:.25px #222">
      <text transform="translate(10.5 24.5) rotate(-90)">Modify</text>
      <text transform="translate(10.5 69.0) rotate(-90)">Inquiry</text>
      <text transform="translate(10.5 109.5) rotate(-90)">View</text>
      <text transform="translate(10.5 153.5) rotate(-90)">3D Orbit</text>
      <text transform="translate(10.5 209.5) rotate(-90)">Draw Order</text>
      <text transform="translate(10.5 262.0) rotate(-90)">Walls</text>
      <text transform="translate(10.5 303.5) rotate(-90)">Doors</text>
      <text transform="translate(10.5 352.5) rotate(-90)">Windows</text>
      <text transform="translate(10.5 400.0) rotate(-90)">Stairs</text>
      <text transform="translate(10.5 445.5) rotate(-90)">Railings</text>
      <text transform="translate(10.5 489.5) rotate(-90)">Steel</text>
    </g>
  </svg>
  <svg class="a" style="left:16px;top:20px" width="30" height="580" viewBox="0 0 30 580" fill="none" stroke-width="1.6">
<g transform="translate(0 0)"><rect x="4" y="3" width="9" height="7" fill="#eef" stroke="#777" stroke-width="1"/><rect x="12" y="15" width="10" height="8" fill="#eef" stroke="#1a2438" stroke-width="1.5"/><path d="M15 6 H19 V12" stroke="#d02020" stroke-width="1.5"/></g>
<g transform="translate(0 0)"><rect x="3" y="33" width="10" height="8" fill="#eef" stroke="#1a2438" stroke-width="1.5"/><rect x="9" y="44" width="10" height="8" fill="#eef" stroke="#1a2438" stroke-width="1.5"/><rect x="15" y="48" width="10" height="8" fill="#eef" stroke="#1a2438" stroke-width="1.5"/><path d="M15 36 H20 V42" stroke="#d02020" stroke-width="1.5"/></g>
<g transform="translate(0 0)"><path d="M4 88 V76 H10 V68 Q10 62 16 62 Q22 62 22 68 V78" stroke="#1a2438" stroke-width="1.8"/><path d="M8 85 V79 H13 V70 Q13 66 16 66 Q19 66 19 70 V78" stroke="#888" stroke-width="1.2"/></g>
<g transform="translate(0 0)"><rect x="4" y="92" width="22" height="22" stroke="#777" stroke-width="1.2" stroke-dasharray="3 2"/><rect x="4" y="106" width="9" height="8" fill="#eef" stroke="#1a2438" stroke-width="1.5"/></g>
<g transform="translate(0 0)"><path d="M6 124 L22 140 M22 124 L6 140" stroke="#d42020" stroke-width="3.5"/></g>
<g transform="translate(0 3)"><path d="M23 154 A10 10 0 1 1 6 156" stroke="#1f5f9a" stroke-width="2.8"/><path d="M20 154 L26 150 L26 158 Z" fill="#1f5f9a" stroke="none"/><path d="M14 159 V166 M10 162.5 H18" stroke="#d02020" stroke-width="1.8"/></g>
<g transform="translate(0 5)"><path d="M23 184 A10 6 0 1 1 6 186" stroke="#1f5f9a" stroke-width="2.8"/><path d="M14 172 V200" stroke="#d02020" stroke-width="1.2" stroke-dasharray="2 1.5"/></g>
<g transform="translate(0 7)"><path d="M12 205 L4 222 H12 Z M16 205 L24 222 H16 Z" stroke="#1a2438" stroke-width="1.5"/><path d="M14 201 V225" stroke="#d02020" stroke-width="1" stroke-dasharray="2 1.5"/></g>
<g transform="translate(0 8)"><path d="M4 236 L12 232 L13 248 L6 250 Z M16 232 L24 236 L22 250 L15 248 Z" stroke="#2a8040" stroke-width="1.2" fill="#dfe"/><path d="M10 246 L20 254" stroke="#d02020" stroke-width="1.2"/></g>
<g transform="translate(0 8)"><g fill="#1f5fb0" stroke="none"><rect x="4" y="263" width="3" height="3"/><rect x="20" y="263" width="3" height="3"/><rect x="4" y="277" width="3" height="3"/><rect x="20" y="277" width="3" height="3"/></g><path d="M8 264 H19 M8 278 H19 M5 267 V276 M21 267 V276" stroke="#1f5fb0" stroke-width="1" stroke-dasharray="2 1.5"/></g>
<g transform="translate(0 9)"><g fill="#1f5fb0" stroke="none"><rect x="3" y="291" width="3" height="3"/><rect x="12" y="291" width="3" height="3" fill="#8ab"/><rect x="21" y="291" width="3" height="3"/><rect x="3" y="299" width="3" height="3" fill="#8ab"/><rect x="12" y="299" width="3" height="3"/><rect x="21" y="299" width="3" height="3" fill="#8ab"/><rect x="3" y="307" width="3" height="3"/><rect x="12" y="307" width="3" height="3" fill="#8ab"/><rect x="21" y="307" width="3" height="3"/></g></g>
<g transform="translate(0 9)"><path d="M12 322 H4 V336 H24 V322 H18" stroke="#1e7a32" stroke-width="3"/><path d="M14 326 L20 320" stroke="#888" stroke-width="1.5"/></g>
<g transform="translate(0 8)"><rect x="4.5" y="352" width="19" height="14" stroke="#1e7a32" stroke-width="3"/></g>
<g transform="translate(0 11)"><rect x="4.5" y="382" width="15" height="14" stroke="#1e7a32" stroke-width="3"/><path d="M17 374 V402" stroke="#333" stroke-width="1.5"/><path d="M17 382 H24 V396 H17" stroke="#888" stroke-width="2.5"/></g>
<g transform="translate(0 13)"><path d="M3 410 L8 404 H24 V420 L19 426 H3 Z M3 410 H19 V426 M19 410 L24 404" stroke="#555" stroke-width="1.1"/><path d="M8 404 V420 H24 M3 426 L8 420" stroke="#999" stroke-width=".8"/></g>
<g transform="translate(0 17)"><rect x="3" y="442" width="5" height="12" stroke="#1a2438" stroke-width="1.5"/><rect x="17" y="428" width="7" height="26" stroke="#1a2438" stroke-width="1.5"/><path d="M9 440 L16 432" stroke="#777" stroke-width="1" stroke-dasharray="1 2"/></g>
<g transform="translate(0 17)"><path d="M3 485 L13 475" stroke="#1a2438" stroke-width="1.6"/><path d="M10 458 L26 474" stroke="#1a2438" stroke-width="1.6"/></g>
<g transform="translate(0 19)"><path d="M3 514 L10 508" stroke="#1a2438" stroke-width="1.6"/><path d="M10 486 L26 500" stroke="#d42020" stroke-width="2"/><path d="M8 514 L24 500" stroke="#d42020" stroke-width="1.8"/><path d="M18 500 H24 V506" stroke="#d42020" stroke-width="1.8"/></g>
<g transform="translate(0 19)"><rect x="4" y="519" width="13" height="20" fill="#eef4fa" stroke="#1a2438" stroke-width="1.6"/><path d="M17 522 L25 539 H17" stroke="#999" stroke-width="1.2"/></g>
<g transform="translate(0 19)"><path d="M3 548 H18 M3 548 V568" stroke="#777" stroke-width="1.1" stroke-dasharray="1.5 2"/><path d="M5 576 Q8 552 24 550 V576" stroke="#1a2438" stroke-width="1.6" fill="#eef4fa"/></g>
  </svg>
  <div class="pt" style="left:45px;top:29px">Move</div>
  <div class="pt" style="left:45px;top:59px">Copy</div>
  <div class="pt" style="left:45px;top:89px">Offset</div>
  <div class="pt" style="left:45px;top:118px">Scale</div>
  <div class="pt" style="left:45px;top:148px">Delete</div>
  <div class="pt" style="left:45px;top:178px">Rotate</div>
  <div class="pt" style="left:45px;top:207px">3D Rotate</div>
  <div class="pt" style="left:45px;top:237px">Mirror</div>
  <div class="pt" style="left:45px;top:267px">3D Mirror</div>
  <div class="pt" style="left:45px;top:297px">Array</div>
  <div class="pt" style="left:45px;top:326px">3D Array</div>
  <div class="pt" style="left:45px;top:356px">Break</div>
  <div class="pt" style="left:45px;top:386px">Join</div>
  <div class="pt" style="left:45px;top:416px">Trim</div>
  <div class="pt" style="left:45px;top:445px">Flatten</div>
  <div class="pt" style="left:45px;top:475px">Align</div>
  <div class="pt" style="left:45px;top:505px">Extend</div>
  <div class="pt" style="left:45px;top:534px">Edit Length</div>
  <div class="pt" style="left:45px;top:564px">Stretch</div>
  <div class="a" style="left:45px;top:590px;width:30px;height:9px;overflow:hidden"><div class="pt" style="left:0;top:3px">Fillet</div></div>
</div>
<!-- right toolbar -->
<div id="rtool" class="a">
  <div class="a" style="left:4px;top:3px;width:20px;height:2px;border-top:2px dotted #333"></div>
  <svg class="a" style="left:0;top:0" width="28" height="252" viewBox="0 0 28 252" fill="none">
    <path d="M6 15 Q8 9 15 10 L13 7 L20 11 L14 15 L15 12 Q11 12 9 15 Z" fill="#1f5fc8"/><path d="M22 17 Q20 23 13 22 L15 25 L8 21 L14 17 L13 20 Q17 20 19 17 Z" fill="#1f5fc8"/>
    <path d="M6 27 H22" stroke="#a0a4aa"/>
    <path d="M9 44 V38 Q10 36 11 38 V35 Q12 33 13 35 V34 Q14 32 15 34 V36 Q16 34 17 36 V42 Q17 47 13 47 Q10 47 9 44 Z" fill="#fff" stroke="#444" stroke-width=".9"/>
    <circle cx="13" cy="60" r="5" fill="#fff" stroke="#333" stroke-width="1.5"/><path d="M17 64 L21 68 M13 57 V60 H15" stroke="#333" stroke-width="1.3"/>
    <circle cx="13" cy="77" r="5" fill="#fff" stroke="#333" stroke-width="1.5"/><path d="M17 81 L21 85" stroke="#333" stroke-width="1.3"/><path d="M8 83 L13 77 L11 76 Z" fill="#1f5fc8"/>
    <circle cx="13" cy="94" r="5" fill="#fff" stroke="#333" stroke-width="1.5"/><path d="M17 98 L21 102" stroke="#333" stroke-width="1.3"/>
    <circle cx="13" cy="111" r="5" fill="#fff" stroke="#333" stroke-width="1.5"/><path d="M17 115 L21 119 M10 114 L15 109" stroke="#1f5fc8" stroke-width="1.5"/>
    <circle cx="13" cy="128" r="5" fill="#fff" stroke="#333" stroke-width="1.5"/><path d="M17 132 L21 136" stroke="#333" stroke-width="1.3"/><path d="M10 128 H16 M13 125 V131" stroke="#1f5fc8" stroke-width="1.5"/>
    <circle cx="13" cy="145" r="5" fill="#fff" stroke="#333" stroke-width="1.5"/><path d="M17 149 L21 153" stroke="#333" stroke-width="1.3"/><rect x="11" y="143" width="4" height="4" fill="#1f5fc8"/>
    <circle cx="13" cy="162" r="5" fill="#fff" stroke="#333" stroke-width="1.5"/><path d="M17 166 L21 170 M10 162 H16" stroke="#333" stroke-width="1.3"/>
    <path d="M6 173 H22" stroke="#a0a4aa"/>
    <circle cx="13" cy="184" r="5" fill="#fff" stroke="#333" stroke-width="1.5"/><path d="M17 188 L21 192" stroke="#333" stroke-width="1.3"/><path d="M10 184 H16 M13 181 V187" stroke="#2a9a3a" stroke-width="1.5"/>
    <circle cx="13" cy="201" r="5" fill="#fff" stroke="#333" stroke-width="1.5"/><path d="M17 205 L21 209" stroke="#333" stroke-width="1.3"/><path d="M10 201 H16" stroke="#d02020" stroke-width="1.5"/>
    <path d="M6 211 H22" stroke="#a0a4aa"/>
    <circle cx="13" cy="223" r="5" fill="#fff" stroke="#333" stroke-width="1.5"/><path d="M17 227 L21 231" stroke="#333" stroke-width="1.3"/><path d="M10 223 H16 M13 220 V226" stroke="#1f5fc8" stroke-width="1.5"/>
    <ellipse cx="14" cy="243" rx="6" ry="3.5" fill="#fff" stroke="#333" stroke-width="1.2"/><circle cx="14" cy="243" r="2" fill="#333"/><circle cx="10" cy="238" r="2" fill="#f0a030"/>
  </svg>
</div>
<!-- model tabs -->
<div id="modeltabs" class="a">
  <svg class="a" style="left:0;top:0" width="160" height="14" viewBox="0 0 160 14">
    <g fill="#e8e8e8" stroke="#b0b0b0" stroke-width=".8"><rect x="1.5" y="1" width="10" height="12"/><rect x="12.5" y="1" width="11" height="12"/><rect x="24.5" y="1" width="11" height="12"/><rect x="36.5" y="1" width="11" height="12"/><rect x="48.5" y="1" width="12" height="12"/></g>
    <g fill="#111"><rect x="4" y="3.5" width="1.3" height="7"/><path d="M10 3.5 V10.5 L5.5 7 Z"/><path d="M20 3.5 V10.5 L15.5 7 Z"/><path d="M28 3.5 V10.5 L32.5 7 Z"/><path d="M39.5 3.5 V10.5 L44 7 Z"/><rect x="44.5" y="3.5" width="1.3" height="7"/></g>
    <path d="M54.5 3 V11 M50.5 7 H58.5" stroke="#111" stroke-width="1.6"/>
    <path d="M62 1 L67 13 H101 L104 1" fill="#fff" stroke="#333" stroke-width=".8"/>
    <path d="M104 1 L101 13 H140 L144 1" fill="#f0f0f0" stroke="#333" stroke-width=".8"/>
  </svg>
  <div class="t" style="left:71px;top:2.5px;font-size:9px;font-weight:bold;color:#111;letter-spacing:-.2px">Model</div>
  <div class="t" style="left:109px;top:2.5px;font-size:8.6px;color:#222;letter-spacing:-.3px">Layout1</div>
</div>
<!-- command -->
<div id="cmd" class="a">
  <div class="a" style="left:0;top:0;width:16px;height:61px;background:linear-gradient(90deg,#c4c4c4,#d0d0d0)"></div>
  <svg class="a" style="left:4px;top:3px" width="8" height="24" viewBox="0 0 8 24"><path d="M1 1 L7 7 M7 1 L1 7" stroke="#222" stroke-width="1.3"/><path d="M1 17 H7 L4 21 Z" fill="#222"/></svg>
  <div class="a" style="left:16px;top:0;width:1px;height:61px;background:#a8a8a8"></div>
  <div class="a mono" style="left:17px;top:1px">Command: _vscurrent<br>Enter an option [2DWireframe/Conceptual/Hidden/Realistic/Shaded/shaded with Edges/shades of Gray/SKetchy/Wireframe/X-ray/Other] &lt;2dWireframe&gt;: _R<br>Command: '_ZOOM<br>Zoom:&nbsp; [In/Out/All/Center/Dynamic/Extents/Left/Previous/Right/Window/ENtity/Scale]&lt;Scale (nX/nXP)&gt;: _E</div>
  <div class="a" style="left:17px;top:45px;width:1483px;height:1px;background:#b8b8b8"></div>
  <div class="a mono" style="left:17px;top:47px;font-size:9.6px">Command:</div>
  <div class="a" style="left:1485px;top:1px;width:14px;height:44px;background:#f0f0f0"></div>
  <div class="a" style="left:1487px;top:16px;width:11px;height:14px;background:#cdcdcd"></div>
  <svg class="a" style="left:1487px;top:5px" width="10" height="40" viewBox="0 0 10 40"><path d="M1.5 5 L5 1.5 L8.5 5" stroke="#333" stroke-width="1.4" fill="none"/><path d="M1.5 33 L5 36.5 L8.5 33" stroke="#333" stroke-width="1.4" fill="none"/></svg>
</div>
<!-- status -->
<div id="status" class="a">
  <div class="t" style="left:4px;top:7.5px;font-size:8.8px;color:#e8e8e8;-webkit-text-stroke:.2px #e8e8e8">Ready</div>
  <div class="a" style="left:826px;top:2px;width:1px;height:21px;background:#555"></div><div class="a" style="left:833px;top:2px;width:1px;height:21px;background:#555"></div>
  <div class="t" style="left:837px;top:7.5px;font-size:8.8px;color:#e8e8e8;letter-spacing:-.15px;-webkit-text-stroke:.2px #e8e8e8">5.8988,2.7741,0.0000</div>
  <svg class="a" style="left:960px;top:0" width="540" height="24" viewBox="0 0 540 24">
    <g stroke="#4e4e4e" stroke-width="1"><path d="M22.5 2 V22 M91.5 2 V22 M163 2 V22 M326.5 2 V22 M361.5 2 V22 M394 2 V22 M417.5 2 V22 M441 2 V22 M464.5 2 V22 M488.7 2 V22 M511 2 V22"/></g>
    <path d="M27 19 L42 5 V19 Z" fill="#e8e8e8"/><path d="M28 10 H42" stroke="#d02020" stroke-width="1.5"/><path d="M34 5 V21" stroke="#2a8a3a" stroke-width="1"/>
    <rect x="48" y="2" width="20" height="20" fill="#f0e800"/><path d="M51 5 H65 V17 H60 L58 20 L56 17 H51 Z" fill="#fff" stroke="#333" stroke-width="1"/><text x="55" y="15" font-family="Liberation Sans" font-size="10" font-weight="bold" fill="#222">?</text>
    <path d="M73 12 H89" stroke="#d02020" stroke-width="1.6"/><path d="M81 4 V20" stroke="#2a8a3a" stroke-width=".8"/><rect x="79" y="10" width="4" height="4" fill="#d02020"/>
    <path d="M97 5 H110 L100 19 M97 5 V19 L104 13 L110 19" stroke="#e6e6e6" stroke-width="1.8" fill="none"/>
    <rect x="119" y="3" width="18" height="18" fill="#a8a8a8" stroke="#ccc" stroke-width="1"/><path d="M128 6 V13 L122 18 M128 13 L134 17" stroke="#f0f0f0" stroke-width="2"/><circle cx="132" cy="16" r="3" fill="#e8e020"/>
    <g fill="#f0f0f0"><circle cx="148" cy="8" r="1.2"/><circle cx="152" cy="8" r="1.2"/><circle cx="156" cy="8" r="1.2"/><circle cx="148" cy="12" r="1.2"/><circle cx="152" cy="12" r="1.2"/><circle cx="156" cy="12" r="1.2"/><circle cx="148" cy="16" r="1.2" fill="#e02020"/><circle cx="152" cy="16" r="1.2"/><circle cx="156" cy="16" r="1.2"/></g>
    <path d="M170 6 V19 M174 6 V19 M178 6 V19 M167 8 H181 M167 12 H181 M167 16 H181" stroke="#f0f0f0" stroke-width="1.4"/>
    <rect x="190" y="3" width="17" height="18" fill="#a8a8a8" stroke="#ccc"/><path d="M193 8 H198 M195.5 5.5 V10.5" stroke="#fff" stroke-width="1.4"/><rect x="197" y="12" width="8" height="4" fill="#333"/>
    <path d="M216 4 V17 H222 V20 H230" stroke="#2a9a3a" stroke-width="1.2" fill="none"/><path d="M220 15 V19 H230" stroke="#d02020" stroke-width="1.2" fill="none"/>
    <rect x="236" y="3" width="18" height="18" fill="#a0a0a0" stroke="#ccc"/><circle cx="245" cy="12" r="6" fill="none" stroke="#333" stroke-width="1.5"/><path d="M245 12 L248 9" stroke="#d02020" stroke-width="1.2"/>
    <rect x="260" y="3" width="18" height="18" fill="#a0a0a0" stroke="#ccc"/><rect x="263" y="6" width="12" height="12" fill="none" stroke="#333" stroke-width="1.2"/><rect x="261" y="4" width="4" height="4" fill="#d02020"/>
    <rect x="283" y="3" width="18" height="18" fill="#a0a0a0" stroke="#ccc"/><path d="M286 18 H298 M286 18 L296 8" stroke="#333" stroke-width="1.2"/>
    <path d="M308 6 H321 M308 10 H318 M308 14 H321 M308 18 H316" stroke="#f0f0f0" stroke-width="2"/>
    <text x="329" y="16" font-family="Liberation Sans" font-size="9" font-weight="bold" fill="#f2f2f2" textLength="30" lengthAdjust="spacingAndGlyphs">MODEL</text>
    <text x="363" y="16" font-family="Liberation Sans" font-size="9" font-weight="bold" fill="#8e8e8e" textLength="28" lengthAdjust="spacingAndGlyphs">TABLET</text>
    <circle cx="407" cy="12" r="5.5" fill="#1f6ad8"/><circle cx="407" cy="12" r="2.2" fill="#333"/><path d="M407 4 V20 M399 12 H415 M401.5 6.5 L412.5 17.5 M412.5 6.5 L401.5 17.5" stroke="#1f6ad8" stroke-width="2.4"/>
    <circle cx="430" cy="8" r="3" fill="none" stroke="#eee" stroke-width="1.8"/><path d="M426 12 H434 L431 15 L434 20 M426 20 L429 15 L426 12" stroke="#eee" stroke-width="1.6" fill="none"/>
    <rect x="448" y="5" width="12" height="11" fill="#fff" stroke="#2a6ad0" stroke-width="1"/><rect x="448" y="16" width="12" height="2" fill="#1f5ac0"/><path d="M455 10 L458 7" stroke="#222"/>
    <rect x="469" y="4" width="10" height="8" fill="#fff" stroke="#1f5ac0"/><rect x="474" y="10" width="11" height="10" fill="#fff" stroke="#1f5ac0"/>
    <circle cx="500" cy="12" r="6.5" fill="#f4f4f4" stroke="#bbb"/><path d="M500 7 V17" stroke="#1f6ad8" stroke-width="1.8"/>
    <circle cx="523" cy="12" r="7" fill="#38b040"/><path d="M519 12 L522 15 L527 9" stroke="#fff" stroke-width="2" fill="none"/>
  </svg>
</div>
</body></html>
